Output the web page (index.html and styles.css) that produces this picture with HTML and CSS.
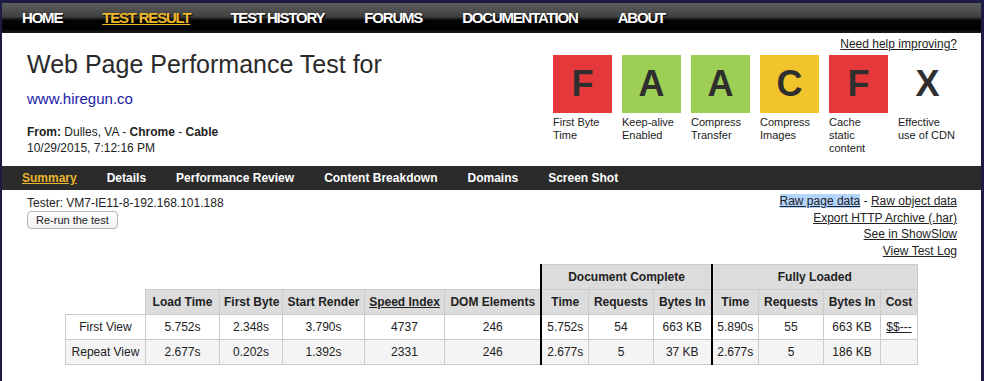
FILE: index.html
```html
<!DOCTYPE html>
<html lang="en">
<head>
    <meta charset="UTF-8">
    <title>WebPagetest Test Result</title>
    <link rel="stylesheet" href="styles.css">
</head>
<body>
<div class="page">
    <div class="topnav">
        <a href="#">HOME</a>
        <a href="#" class="active">TEST RESULT</a>
        <a href="#">TEST HISTORY</a>
        <a href="#">FORUMS</a>
        <a href="#">DOCUMENTATION</a>
        <a href="#">ABOUT</a>
    </div>

    <div class="header">
        <div class="title-block">
            <h1>Web Page Performance Test for</h1>
            <a class="url" href="#">www.hiregun.co</a>
            <p class="from"><b>From:</b> Dulles, VA - <b>Chrome</b> - <b>Cable</b><br>10/29/2015, 7:12:16 PM</p>
        </div>

        <div class="grades">
            <a class="help" href="#">Need help improving?</a>
            <div class="grade-row">
                <div class="grade">
                    <div class="box red">F</div>
                    <div class="label">First Byte Time</div>
                </div>
                <div class="grade">
                    <div class="box green">A</div>
                    <div class="label">Keep-alive Enabled</div>
                </div>
                <div class="grade">
                    <div class="box green">A</div>
                    <div class="label">Compress Transfer</div>
                </div>
                <div class="grade">
                    <div class="box yellow">C</div>
                    <div class="label">Compress Images</div>
                </div>
                <div class="grade">
                    <div class="box red">F</div>
                    <div class="label">Cache static content</div>
                </div>
                <div class="grade">
                    <div class="box">X</div>
                    <div class="label">Effective use of CDN</div>
                </div>
            </div>
        </div>
    </div>

    <!-- result tabs -->
    <div class="subnav">
        <a href="#" class="active">Summary</a>
        <a href="#">Details</a>
        <a href="#">Performance Review</a>
        <a href="#">Content Breakdown</a>
        <a href="#">Domains</a>
        <a href="#">Screen Shot</a>
    </div>

    <div class="info">
        <div class="tester">
            <div>Tester: VM7-IE11-8-192.168.101.188</div>
            <button class="rerun">Re-run the test</button>
        </div>
        <div class="links">
            <a href="#" class="selected">Raw page data</a> - <a href="#">Raw object data</a><br>
            <a href="#">Export HTTP Archive (.har)</a><br>
            <a href="#">See in ShowSlow</a><br>
            <a href="#">View Test Log</a>
        </div>
    </div>

    <table class="results">
        <colgroup>
            <col style="width:80px"><col style="width:74px"><col style="width:63px"><col style="width:82px">
            <col style="width:80px"><col style="width:97px"><col style="width:47px"><col style="width:65px">
            <col style="width:58px"><col style="width:47px"><col style="width:65px"><col style="width:57px">
            <col style="width:37px">
        </colgroup>
        <tr>
            <td class="empty" colspan="6"></td>
            <th class="group" colspan="3">Document Complete</th>
            <th class="group" colspan="4">Fully Loaded</th>
        </tr>
        <tr>
            <th class="empty"></th>
            <th>Load Time</th>
            <th>First Byte</th>
            <th>Start Render</th>
            <th><a href="#">Speed Index</a></th>
            <th>DOM Elements</th>
            <th class="group">Time</th>
            <th>Requests</th>
            <th>Bytes In</th>
            <th class="group">Time</th>
            <th>Requests</th>
            <th>Bytes In</th>
            <th>Cost</th>
        </tr>
        <tr>
            <td>First View</td>
            <td>5.752s</td>
            <td>2.348s</td>
            <td>3.790s</td>
            <td>4737</td>
            <td>246</td>
            <td class="group">5.752s</td>
            <td>54</td>
            <td>663 KB</td>
            <td class="group">5.890s</td>
            <td>55</td>
            <td>663 KB</td>
            <td><a href="#">$$---</a></td>
        </tr>
        <tr class="alt">
            <td>Repeat View</td>
            <td>2.677s</td>
            <td>0.202s</td>
            <td>1.392s</td>
            <td>2331</td>
            <td>246</td>
            <td class="group">2.677s</td>
            <td>5</td>
            <td>37 KB</td>
            <td class="group">2.677s</td>
            <td>5</td>
            <td>186 KB</td>
            <td></td>
        </tr>
    </table>
</div>
</body>
</html>
```

FILE: styles.css
```css
body {
    margin: 0;
    background: #1c1b46;
    font-family: "Liberation Sans", Arial, sans-serif;
    color: #222;
}

.page {
    margin: 3px 3px 0 2px;
    background: #fff;
    min-height: 378px;
}

a {
    color: #222;
}

/* Top navigation */
.topnav {
    display: flex;
    height: 30px;
    background: linear-gradient(#5e5e5e 0%, #404040 45%, #050505 58%, #000 85%, #1a1a1a 100%);
}
.topnav a {
    padding: 0 20px;
    line-height: 30px;
    color: #fff;
    font-size: 15px;
    font-weight: bold;
    letter-spacing: -1.2px;
    text-decoration: none;
    text-shadow: 1px 1px 1px #000;
}
.topnav a.active {
    color: #efb92c;
    text-decoration: underline;
}

/* Header */
.header {
    display: flex;
    justify-content: space-between;
    height: 133px;
    padding: 0 24px 0 25px;
}
.title-block h1 {
    margin: 16px 0 0;
    font-size: 25px;
    font-weight: normal;
    line-height: 30px;
    color: #2a2a2a;
}
.url {
    display: block;
    margin-top: 11px;
    font-size: 15px;
    line-height: 18px;
    color: #1a1aa6;
    text-decoration: none;
}
.from {
    margin: 16px 0 0;
    font-size: 12px;
    line-height: 16px;
}

.grades {
    width: 404px;
    margin-top: 1px;
    text-align: right;
}
.help {
    font-size: 12px;
    line-height: 14px;
}
.grade-row {
    display: flex;
    gap: 10px;
    margin-top: 3px;
    text-align: left;
}
.grade {
    width: 59px;
}
.box {
    height: 58px;
    line-height: 58px;
    text-align: center;
    font-size: 36px;
    font-weight: bold;
    color: #2f2f2f;
}
.red { background: #e5383a; }
.green { background: #9dcf55; }
.yellow { background: #f2c42c; }
.label {
    margin-top: 3px;
    font-size: 11px;
    line-height: 13px;
}

/* Result tabs */
.subnav {
    display: flex;
    height: 24px;
    padding-left: 5px;
    background: #2b2b2b;
}
.subnav a {
    padding: 0 15px;
    line-height: 24px;
    color: #fff;
    font-size: 12px;
    font-weight: bold;
    text-decoration: none;
}
.subnav a.active {
    color: #e9b52b;
    text-decoration: underline;
}

/* Tester and links */
.info {
    display: flex;
    justify-content: space-between;
    align-items: flex-start;
    padding: 0 24px 0 25px;
    font-size: 12px;
}
.tester {
    margin-top: 5px;
    line-height: 16px;
}
.rerun {
    display: block;
    font-family: "Liberation Sans", Arial, sans-serif;
    font-size: 11px;
    line-height: 14px;
    padding: 1px 8px;
    color: #222;
    background: linear-gradient(#fff, #f1f1f1);
    border: 1px solid #b5b5b5;
    border-radius: 4px;
}
.links {
    margin-top: 3px;
    line-height: 16.7px;
    text-align: right;
}
.selected {
    background: #b3d4fc;
}

/* Results table */
.results {
    width: 852px;
    margin: 4px auto 0;
    table-layout: fixed;
    border-collapse: collapse;
    font-size: 12px;
    text-align: center;
}
.results th,
.results td {
    height: 24px;
    padding: 0 4px;
    border: 1px solid #cbcbcb;
    white-space: nowrap;
}
.results th {
    background: #dcdcdc;
}
.results td {
    background: #fff;
}
.results tr.alt td {
    background: #f4f4f4;
}
.results .empty {
    border: none;
    background: #fff;
}
.results .group {
    border-left: 2px solid #000;
}
```
